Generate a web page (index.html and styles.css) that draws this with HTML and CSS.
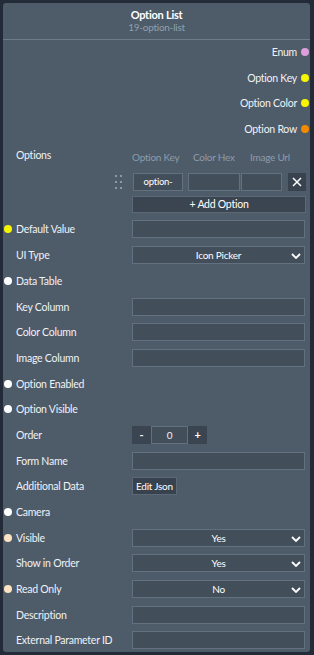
FILE: index.html
```html
<!DOCTYPE html>
<html>
<head>
<meta charset="utf-8">
<link rel="stylesheet" href="styles.css">
</head>
<body>
<div class="node">
  <div class="node-head">
    <div class="title">Option List</div>
    <div class="subtitle">19-option-list</div>
  </div>
  <div class="node-body">
    <div class="out"><span>Enum</span><i class="dot pink"></i></div>
    <div class="out"><span>Option Key</span><i class="dot yellow"></i></div>
    <div class="out"><span>Option Color</span><i class="dot yellow"></i></div>
    <div class="out"><span>Option Row</span><i class="dot orange"></i></div>

    <div class="opts">
      <div class="label opts-label">Options</div>
      <div class="opts-ctrl">
        <div class="opts-head">
          <span class="h1">Option Key</span>
          <span class="h2">Color Hex</span>
          <span class="h3">Image Url</span>
        </div>
        <div class="opts-item">
          <span class="grip">
            <svg width="8" height="14" viewBox="0 0 8 14"><g fill="#8a97a4"><rect x="0" y="0" width="2" height="2"/><rect x="5" y="0" width="2" height="2"/><rect x="0" y="6" width="2" height="2"/><rect x="5" y="6" width="2" height="2"/><rect x="0" y="12" width="2" height="2"/><rect x="5" y="12" width="2" height="2"/></g></svg>
          </span>
          <span class="box key">option-</span>
          <span class="box hex"></span>
          <span class="box img"></span>
          <span class="xbtn"><svg width="10" height="10" viewBox="0 0 10 10"><path d="M1 1L9 9M9 1L1 9" stroke="#fff" stroke-width="1.5"/></svg></span>
        </div>
        <div class="addbtn">+ Add Option</div>
      </div>
    </div>

    <div class="row"><i class="dot yellow"></i><span class="label">Default Value</span><span class="box"></span></div>
    <div class="row"><span class="label">UI Type</span><span class="box select">Icon Picker<svg class="chev" width="10" height="6" viewBox="0 0 10 6"><path d="M1 1L5 5L9 1" stroke="#fff" stroke-width="1.8" fill="none"/></svg></span></div>
    <div class="row"><i class="dot white"></i><span class="label">Data Table</span></div>
    <div class="row"><span class="label">Key Column</span><span class="box"></span></div>
    <div class="row"><span class="label">Color Column</span><span class="box"></span></div>
    <div class="row"><span class="label">Image Column</span><span class="box"></span></div>
    <div class="row"><i class="dot white"></i><span class="label">Option Enabled</span></div>
    <div class="row"><i class="dot white"></i><span class="label">Option Visible</span></div>
    <div class="row"><span class="label">Order</span>
      <span class="stepper"><span class="sbtn">-</span><span class="sval">0</span><span class="sbtn">+</span></span>
    </div>
    <div class="row"><span class="label">Form Name</span><span class="box"></span></div>
    <div class="row"><span class="label">Additional Data</span><span class="jsonbtn">Edit Json</span></div>
    <div class="row"><i class="dot white"></i><span class="label">Camera</span></div>
    <div class="row"><i class="dot peach"></i><span class="label">Visible</span><span class="box select">Yes<svg class="chev" width="10" height="6" viewBox="0 0 10 6"><path d="M1 1L5 5L9 1" stroke="#fff" stroke-width="1.8" fill="none"/></svg></span></div>
    <div class="row"><span class="label">Show in Order</span><span class="box select">Yes<svg class="chev" width="10" height="6" viewBox="0 0 10 6"><path d="M1 1L5 5L9 1" stroke="#fff" stroke-width="1.8" fill="none"/></svg></span></div>
    <div class="row"><i class="dot peach"></i><span class="label">Read Only</span><span class="box select">No<svg class="chev" width="10" height="6" viewBox="0 0 10 6"><path d="M1 1L5 5L9 1" stroke="#fff" stroke-width="1.8" fill="none"/></svg></span></div>
    <div class="row"><span class="label">Description</span><span class="box"></span></div>
    <div class="row"><span class="label">External Parameter ID</span><span class="box"></span></div>
  </div>
</div>
</body>
</html>
```
FILE: styles.css
```css
html, body {
  margin: 0;
  padding: 0;
}
body {
  background-color: #222b37;
  font-family: "Lato", "Open Sans", sans-serif;
  color: #eef2f6;
  width: 314px;
  height: 655px;
  overflow: hidden;
  letter-spacing: -0.25px;
}
.node {
  margin: 3px 4px 0 3px;
  width: 307px;
  height: 649px;
  background: #4e5b69;
  border-radius: 3px;
  box-sizing: border-box;
}
.node-head {
  height: 37px;
  border-bottom: 1px solid #6d7c8a;
  text-align: center;
  padding-top: 5px;
  box-sizing: border-box;
}
.title {
  font-size: 11px;
  font-weight: 700;
  line-height: 13px;
  color: #ffffff;
}
.subtitle {
  font-size: 10px;
  line-height: 13px;
  color: #8fa0b0;
}
.node-body {
  padding: 3px 5px 0 13px;
  display: flex;
  flex-direction: column;
  gap: 7.7px;
}
.out {
  height: 18px;
  display: flex;
  align-items: center;
  justify-content: flex-end;
  gap: 4px;
  margin-right: -4px;
  font-size: 10.5px;
}
.dot {
  display: block;
  width: 8px;
  height: 8px;
  border-radius: 50%;
}
.pink { background: #dc9fdc; }
.yellow { background: #f6f600; }
.orange { background: #f28a00; }
.white { background: #ffffff; }
.peach { background: #fde3c2; }
.row {
  position: relative;
  height: 18px;
  display: flex;
  align-items: center;
}
.row .dot {
  position: absolute;
  left: -12px;
  top: 5px;
}
.label {
  font-size: 10.5px;
  color: #eef2f6;
  width: 116px;
  flex: none;
  white-space: nowrap;
}
.box {
  flex: 1;
  height: 18px;
  box-sizing: border-box;
  background: #434e5b;
  border: 1px solid #627180;
  font-size: 10px;
  color: #fff;
}
.select {
  position: relative;
  display: flex;
  align-items: center;
  justify-content: center;
}
.chev {
  position: absolute;
  right: 3px;
  top: 6px;
}
.opts {
  display: flex;
  height: 67px;
}
.opts-label {
  padding-top: 2px;
  line-height: 14px;
}
.opts-ctrl {
  flex: 1;
  display: flex;
  flex-direction: column;
}
.opts-head {
  display: flex;
  height: 18px;
  align-items: center;
  margin-top: 2px;
  font-size: 10px;
  color: #8d9bab;
  white-space: nowrap;
}
.h1 { width: 61px; }
.h2 { width: 57px; }
.opts-item {
  display: flex;
  height: 18px;
  margin-top: 7px;
  margin-left: -17px;
  align-items: center;
}
.grip {
  width: 18px;
  display: flex;
  justify-content: flex-start;
}
.opts-item .box {
  flex: none;
  height: 18px;
}
.key {
  width: 50px;
  display: flex;
  align-items: center;
  justify-content: center;
  font-size: 9.5px;
}
.hex { width: 52px; margin-left: 5px; }
.img { width: 41px; margin-left: 1px; }
.xbtn {
  margin-left: 6px;
  width: 18px;
  height: 18px;
  background: #39434f;
  display: flex;
  align-items: center;
  justify-content: center;
}
.addbtn {
  margin-top: 5px;
  height: 17px;
  box-sizing: border-box;
  background: #3a4551;
  border: 1px solid #5b6875;
  font-size: 10.5px;
  color: #fff;
  display: flex;
  align-items: center;
  justify-content: center;
}
.stepper {
  display: flex;
  height: 18px;
}
.sbtn {
  width: 19px;
  height: 18px;
  background: #3a4551;
  color: #fff;
  font-size: 11px;
  font-weight: 700;
  display: flex;
  align-items: center;
  justify-content: center;
}
.sval {
  width: 37px;
  height: 18px;
  box-sizing: border-box;
  border: 1px solid #627180;
  background: #434e5b;
  font-size: 10px;
  display: flex;
  align-items: center;
  justify-content: center;
}
.jsonbtn {
  height: 18px;
  box-sizing: border-box;
  padding: 0 3px;
  background: #38424e;
  border: 1px solid #5b6875;
  font-size: 10px;
  color: #fff;
  display: flex;
  align-items: center;
}
```
